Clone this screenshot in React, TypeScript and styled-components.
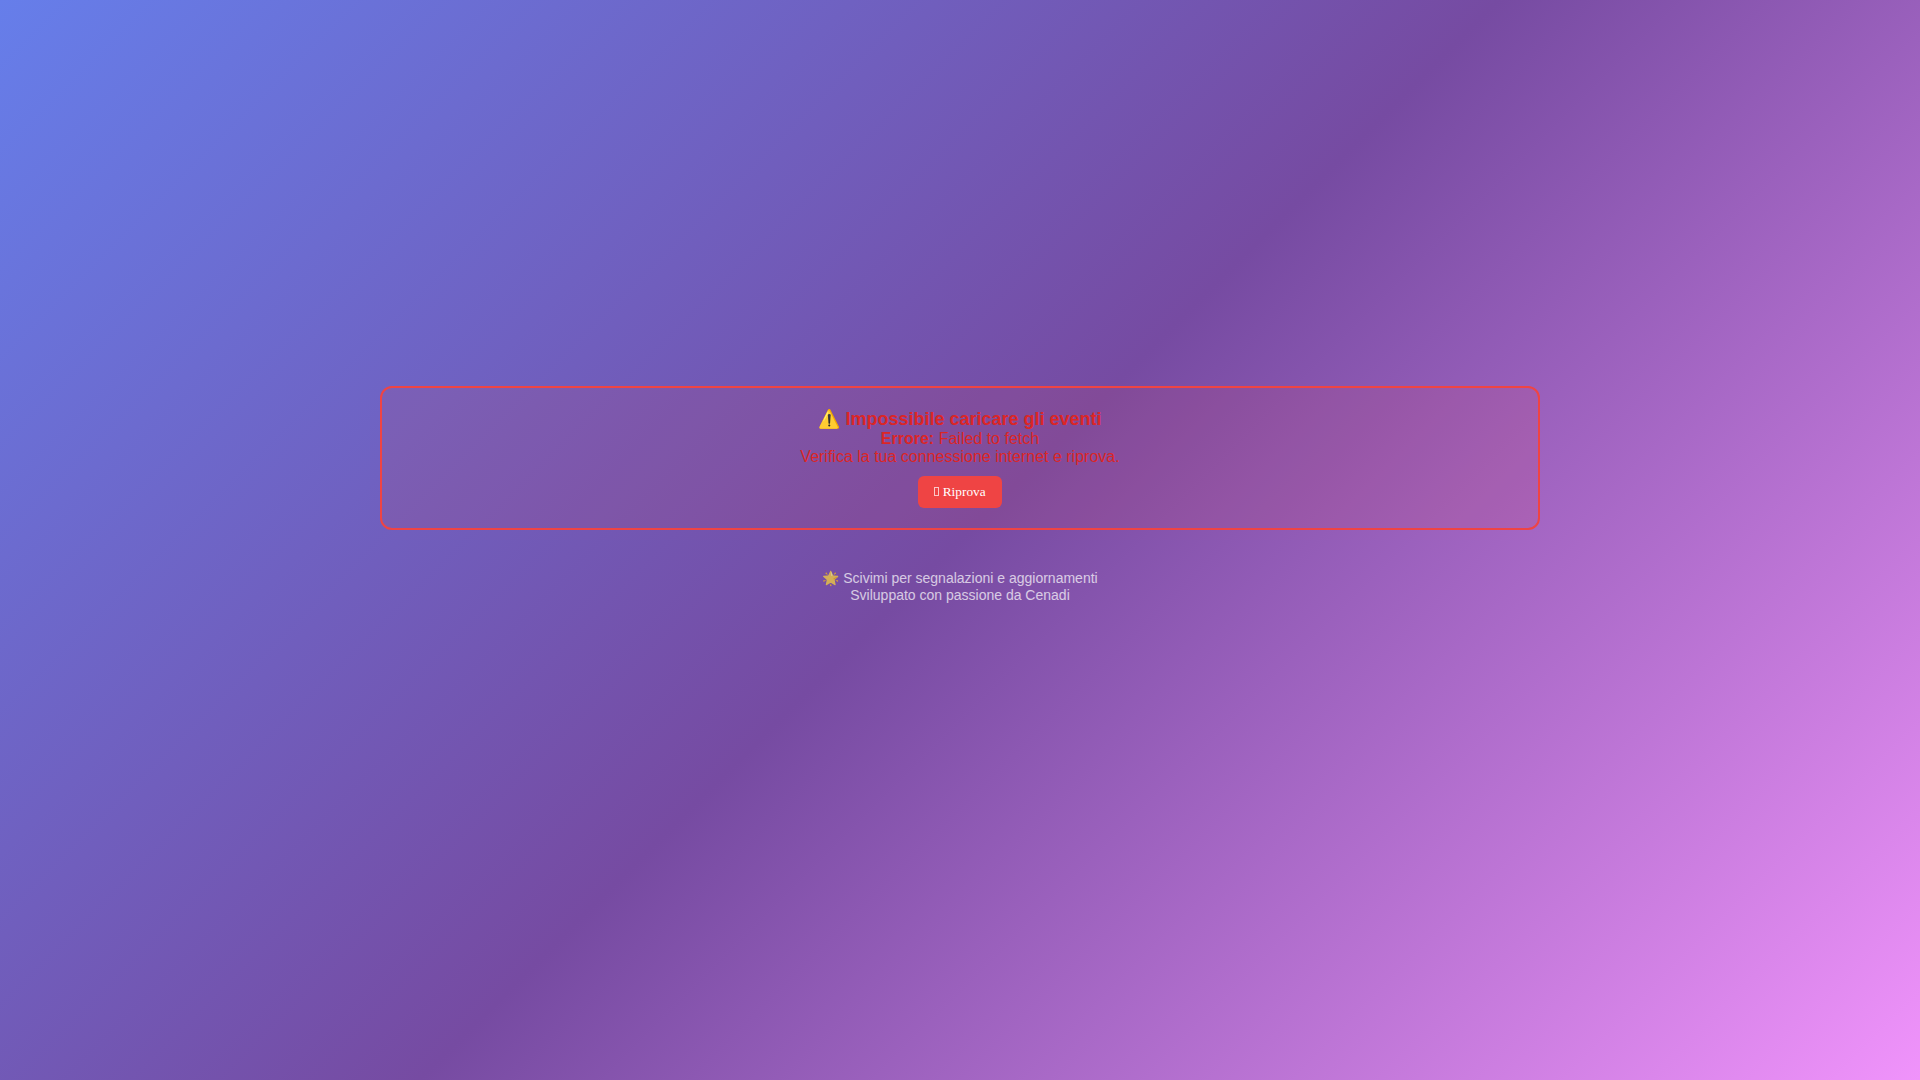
import React from "react";
import styled, { createGlobalStyle } from "styled-components";

const GlobalStyle = createGlobalStyle`
  * {
    box-sizing: border-box;
    margin: 0;
    padding: 0;
  }

  body {
    min-height: 100vh;
    background: linear-gradient(135deg, #667eea 0%, #764ba2 50%, #f093fb 100%);
    font-family: "Liberation Sans", Arial, sans-serif;
    font-size: 16px;
  }
`;

const Page = styled.main`
  max-width: 1200px;
  margin: 0 auto;
  padding: 386px 20px 20px;
`;

const ErrorCard = styled.section`
  padding: 20px;
  border: 2px solid #ef4444;
  border-radius: 12px;
  background: rgba(239, 68, 68, 0.1);
  color: #dc2626;
  text-align: center;
`;

const ErrorTitle = styled.h3`
  font-size: 18px;
  line-height: 22px;
`;

const ErrorText = styled.p`
  line-height: 18px;
`;

const RetryButton = styled.button`
  margin-top: 10px;
  padding: 8px 16px;
  border: none;
  border-radius: 6px;
  background: #ef4444;
  color: #ffffff;
  font-family: "Liberation Serif", serif;
  line-height: 16px;
  cursor: pointer;
`;

const GlyphBox = styled.span`
  display: inline-block;
  width: 5px;
  height: 9px;
  border: 1px solid rgba(255, 255, 255, 0.7);
`;

const Footer = styled.footer`
  margin-top: 40px;
  color: #ffffff;
  font-size: 14px;
  line-height: 17px;
  text-align: center;
  opacity: 0.7;
`;

export default function App() {
  return (
    <>
      <GlobalStyle />
      <Page>
        <ErrorCard role="alert">
          <ErrorTitle>⚠️ Impossibile caricare gli eventi</ErrorTitle>
          <ErrorText>
            <strong>Errore:</strong> Failed to fetch
          </ErrorText>
          <ErrorText>Verifica la tua connessione internet e riprova.</ErrorText>
          <RetryButton type="button" onClick={() => window.location.reload()}>
            <GlyphBox aria-hidden="true" /> Riprova
          </RetryButton>
        </ErrorCard>
        <Footer>
          <p>🌟 Scivimi per segnalazioni e aggiornamenti</p>
          <p>Sviluppato con passione da Cenadi</p>
        </Footer>
      </Page>
    </>
  );
}
